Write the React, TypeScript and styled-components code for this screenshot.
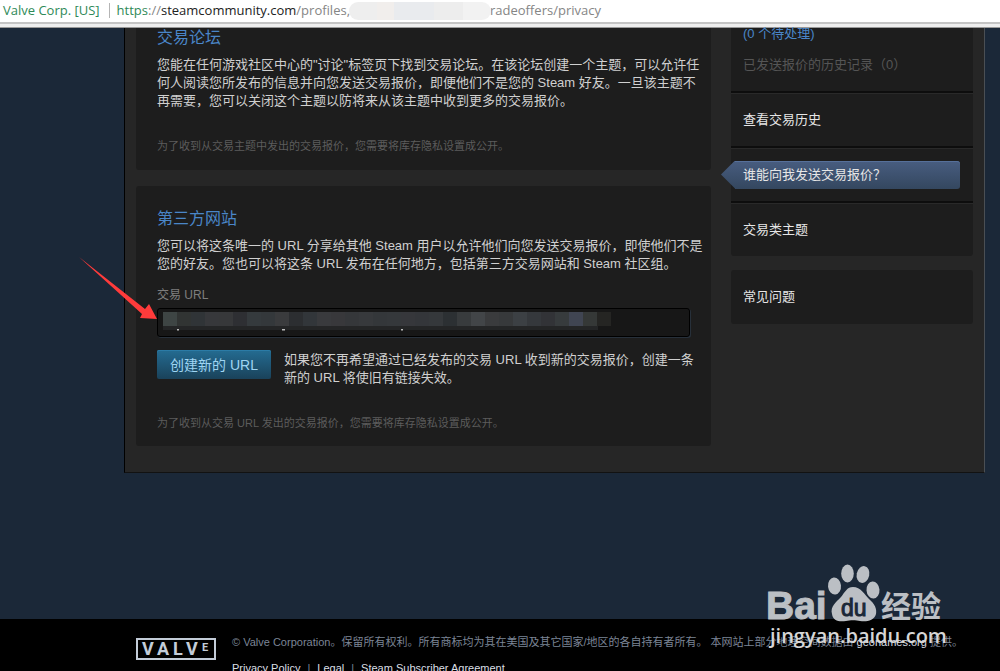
import React from "react";
import styled, { createGlobalStyle } from "styled-components";

const GlobalStyle = createGlobalStyle`
  * { box-sizing: border-box; }
  body {
    margin: 0;
    background: #1b2838;
    font-family: "Liberation Sans", "Noto Sans CJK SC", sans-serif;
    font-size: 13px;
    line-height: 18px;
    color: #d0d0d0;
  }
  a { color: inherit; text-decoration: none; }
`;

const Page = styled.div`
  position: relative;
  height: 100vh;
  overflow: hidden;
  display: flex;
  flex-direction: column;
`;

const AddressBar = styled.header`
  flex: none;
  height: 28px;
  padding: 0 3px;
  background: linear-gradient(#fff 0 22px, #c4c4c4 22px 24px, #eee 24px 27px, #999 27px);
  display: flex;
  align-items: flex-start;
  font-family: "Open Sans", sans-serif;
  font-size: 13px;
  line-height: 21px;
  white-space: pre;
`;

const Secure = styled.span`
  color: #2f8a58;
`;

const Separator = styled.span`
  width: 1px;
  height: 15px;
  margin: 3px 7px 0 9px;
  background: #b5b5b5;
`;

const Host = styled.span`
  color: #222;
`;

const Path = styled.span`
  color: #858585;
`;

const Redacted = styled.span`
  width: 142px;
  height: 18px;
  margin: 2px -1px 0 -1px;
  border-radius: 9px;
  background: linear-gradient(90deg, #eee 0 20%, #f1eeec 20% 32%, #e9ebee 32% 60%, #ededed 60% 80%, #f2f2f2 80%);
  z-index: 1;
`;

const Shell = styled.main`
  flex: none;
  display: flex;
  align-items: flex-start;
  gap: 20px;
  margin: 0 15px 0 124px;
  padding: 0 11px 26px;
  background: #262626;
  border-left: 1px solid #000;
  border-right: 1px solid #4a4f54;
  border-bottom: 1px solid #121212;
`;

const Column = styled.div`
  flex: 1;
  min-width: 0;
  display: flex;
  flex-direction: column;
  gap: 16px;
`;

const Panel = styled.section<{ $clipped?: boolean }>`
  padding: ${(p) => (p.$clipped ? "1px 21px 16px" : "24px 21px 15px")};
  background: #1d1d1d;
  border-radius: ${(p) => (p.$clipped ? "0 0 3px 3px" : "3px")};
`;

const Title = styled.h2`
  margin: 0 0 8px;
  font-size: 16px;
  font-weight: 400;
  line-height: 18px;
  color: #4a86c8;
`;

const Copy = styled.p`
  margin: 0;
  padding-top: 1px;
  white-space: nowrap;
`;

const Note = styled.p`
  margin: 0;
  padding-top: 28px;
  font-size: 11px;
  line-height: 16px;
  color: #5c5c5c;
`;

const FieldLabel = styled.label`
  display: block;
  margin-top: 13px;
  font-size: 12px;
  line-height: 18px;
  color: #7d7d7d;
`;

const FieldWrap = styled.div`
  position: relative;
  margin-top: 4px;
`;

const Field = styled.input`
  display: block;
  width: 100%;
  height: 29px;
  padding: 0 6px;
  color: #ccc;
  background: #171717;
  border: 1px solid #000;
  border-radius: 3px;
  box-shadow: 1px 1px 0 #27303a;
`;

const Mosaic = styled.svg`
  position: absolute;
  left: 5px;
  top: 4px;
`;

const CreateRow = styled.div`
  display: flex;
  align-items: flex-start;
  gap: 13px;
  margin-top: 13px;
`;

const CreateButton = styled.button`
  flex: none;
  width: 114px;
  height: 29px;
  padding: 0;
  border: 0;
  border-radius: 2px;
  background: linear-gradient(#246c92, #1a425a);
  box-shadow: inset 0 1px 0 #2b7ba6;
  color: #9fd5f3;
  font: inherit;
  font-size: 14px;
  white-space: nowrap;
`;

const Sidebar = styled.nav`
  flex: none;
  width: 242px;
  display: flex;
  flex-direction: column;
  gap: 14px;
`;

const Menu = styled.ul<{ $clipped?: boolean }>`
  margin: 0;
  padding: 0;
  list-style: none;
  background: #1d1d1d;
  border-radius: ${(p) => (p.$clipped ? "0 0 3px 3px" : "3px")};
`;

const MenuItem = styled.li<{ $divided?: boolean }>`
  display: flex;
  align-items: center;
  height: ${(p) => (p.$divided ? "55px" : "54px")};
  padding: 0 13px 0 12px;
  color: #e6e6e6;
  border-top: ${(p) => (p.$divided ? "2px solid #0d0d0d" : "0")};
  box-shadow: ${(p) => (p.$divided ? "inset 0 1px 0 #292929" : "none")};
`;

const OfferGroup = styled.li`
  display: flex;
  flex-direction: column;
  gap: 19px;
  padding: 0 12px 20px;
  line-height: 12px;
  color: #4a86c8;
`;

const Faded = styled.a`
  color: #555;
`;

const Active = styled.a`
  position: relative;
  flex: 1;
  height: 28px;
  margin-left: -8px;
  padding-left: 8px;
  line-height: 28px;
  border-radius: 0 3px 3px 0;
  background: linear-gradient(#485d80, #34475f);
  box-shadow: inset 0 1px 0 #56709a;

  &::before {
    content: "";
    position: absolute;
    right: 100%;
    top: 0;
    width: 14px;
    height: 28px;
    background: linear-gradient(#485d80, #34475f);
    clip-path: polygon(100% 0, 100% 100%, 0 50%);
  }
`;

const Footer = styled.footer`
  flex: 1 0 auto;
  display: flex;
  align-items: flex-start;
  gap: 14px;
  margin-top: 146px;
  padding: 14px 15px 0 135px;
  background: #000;
  font-size: 11px;
  line-height: 18px;
  color: #7c8596;
  white-space: nowrap;
`;

const Logo = styled.svg`
  flex: none;
  margin-top: 4px;
`;

const Legal = styled.div`
  display: flex;
  flex-direction: column;
  gap: 8px;

  a { color: #dadfe4; }
`;

const Notice = styled.p`
  margin: 0;
`;

const Links = styled.div`
  display: flex;
  gap: 7px;
`;

const Arrow = styled.svg`
  position: absolute;
  left: 76px;
  top: 254px;
`;

const Watermark = styled.svg`
  position: absolute;
  right: 50px;
  bottom: 16px;
`;

const cells = [
  "#3e4544", "#313433", "#303437", "#37383b", "#37383a", "#2e2f33", "#353a3d", "#34383b", "#3a3b3d",
  "#2c2e31", "#32363a", "#393a3d", "#38383b", "#35373a", "#37393c", "#34373a", "#35383b", "#36373b",
  "#34363a", "#35383b", "#2c3033", "#383b3d", "#424548", "#3a3b3d", "#37393b", "#3c4044", "#35383c",
  "#323337", "#373b3d", "#404552", "#353837", "#252523",
];

function PixelatedUrl() {
  return (
    <Mosaic width="450" height="20" viewBox="0 0 450 20" aria-hidden="true">
      {cells.map((fill, i) => (
        <rect key={i} x={i * 14 + 1} y="0" width="14" height="14" fill={fill} />
      ))}
      <rect x="1" y="14" width="435" height="4" fill="#242526" />
      <path d="M15 17h2v1.500h-2zM120 17h3v1.500h-3zM239 17h2v1.500h-2z" fill="#bbb" />
    </Mosaic>
  );
}

function ValveLogo() {
  return (
    <Logo width="83" height="24" viewBox="0 0 83 24" role="img" aria-label="Valve">
      <rect x="2" y="2" width="78" height="20" fill="none" stroke="#c3ccd8" strokeWidth="2" />
      <g fill="#c3ccd8" fontFamily="Liberation Sans Narrow, Roboto, sans-serif" fontWeight="700" fontSize="18">
        <text x="7" y="18">V</text>
        <text x="22" y="18">A</text>
        <text x="38" y="18">L</text>
        <text x="51" y="18">V</text>
        <text x="67" y="14" fontSize="11">E</text>
      </g>
    </Logo>
  );
}

function BaiduMark() {
  return (
    <Watermark width="184" height="94" viewBox="0 0 184 94" role="img" aria-label="Baidu 经验">
      <g fill="#bbbfc4">
        <ellipse cx="68.500" cy="25" rx="6.500" ry="8.500" transform="rotate(-6 68.500 25)" />
        <ellipse cx="81.500" cy="12.500" rx="6.300" ry="9" />
        <ellipse cx="97" cy="13.500" rx="6.300" ry="8.500" transform="rotate(12 97 13.500)" />
        <ellipse cx="107" cy="29" rx="6.500" ry="8.500" transform="rotate(-4 107 29)" />
        <path d="M87 26C95 26 98 33 103 38C109 43 111 48 110 53C108 60 100 61 94 60C90 59 84 59 80 60C73 61 67 60 66 53C64 46 70 41 75 36C79 31 81 26 87 26Z" />
        <text x="0" y="58" fontFamily="Liberation Sans" fontWeight="700" fontSize="39" stroke="#bbbfc4">Bai</text>
        <text x="115" y="56" fontFamily="Noto Sans CJK SC" fontWeight="700" fontSize="30">经验</text>
      </g>
      <text x="75" y="55" fontFamily="Liberation Sans" fontSize="23" fill="#1b2838" stroke="#1b2838">du</text>
      <text x="4" y="82" fontFamily="Open Sans" fontWeight="600" fontSize="20" fill="#d6d6d6">jingyan.baidu.com</text>
    </Watermark>
  );
}

export default function App() {
  return (
    <>
      <GlobalStyle />
      <Page>
        <AddressBar>
          <Secure>Valve Corp. [US]</Secure>
          <Separator />
          <Secure>https</Secure>
          <Path>://</Path>
          <Host>steamcommunity.com</Host>
          <Path>/profiles,</Path>
          <Redacted />
          <Path>radeoffers/privacy</Path>
        </AddressBar>

        <Shell>
          <Column>
            <Panel $clipped>
              <Title>交易论坛</Title>
              <Copy>
                您能在任何游戏社区中心的"讨论"标签页下找到交易论坛。在该论坛创建一个主题，可以允许任
                <br />
                何人阅读您所发布的信息并向您发送交易报价，即便他们不是您的 Steam 好友。一旦该主题不
                <br />
                再需要，您可以关闭这个主题以防将来从该主题中收到更多的交易报价。
              </Copy>
              <Note>为了收到从交易主题中发出的交易报价，您需要将库存隐私设置成公开。</Note>
            </Panel>

            <Panel>
              <Title>第三方网站</Title>
              <Copy>
                您可以将这条唯一的 URL 分享给其他 Steam 用户以允许他们向您发送交易报价，即使他们不是
                <br />
                您的好友。您也可以将这条 URL 发布在任何地方，包括第三方交易网站和 Steam 社区组。
              </Copy>
              <FieldLabel htmlFor="trade-url">交易 URL</FieldLabel>
              <FieldWrap>
                <Field id="trade-url" type="text" readOnly />
                <PixelatedUrl />
              </FieldWrap>
              <CreateRow>
                <CreateButton type="button">创建新的 URL</CreateButton>
                <Copy>
                  如果您不再希望通过已经发布的交易 URL 收到新的交易报价，创建一条
                  <br />
                  新的 URL 将使旧有链接失效。
                </Copy>
              </CreateRow>
              <Note>为了收到从交易 URL 发出的交易报价，您需要将库存隐私设置成公开。</Note>
            </Panel>
          </Column>

          <Sidebar>
            <Menu $clipped>
              <OfferGroup>
                <a href="#pending">(0 个待处理)</a>
                <Faded href="#sent">已发送报价的历史记录（0）</Faded>
              </OfferGroup>
              <MenuItem $divided><a href="#history">查看交易历史</a></MenuItem>
              <MenuItem $divided><Active href="#privacy">谁能向我发送交易报价？</Active></MenuItem>
              <MenuItem $divided><a href="#topics">交易类主题</a></MenuItem>
            </Menu>
            <Menu>
              <MenuItem><a href="#faq">常见问题</a></MenuItem>
            </Menu>
          </Sidebar>
        </Shell>

        <Footer>
          <ValveLogo />
          <Legal>
            <Notice>
              © Valve Corporation。保留所有权利。所有商标均为其在美国及其它国家/地区的各自持有者所有。 本网站上部分地理空间数据由{" "}
              <a href="#geonames">geonames.org</a> 提供。
            </Notice>
            <Links>
              <a href="#policy">Privacy Policy</a>
              <span>|</span>
              <a href="#legal">Legal</a>
              <span>|</span>
              <a href="#agreement">Steam Subscriber Agreement</a>
            </Links>
          </Legal>
        </Footer>

        <Arrow width="84" height="70" viewBox="0 0 84 70" aria-hidden="true">
          <path d="M3 3L69 55L73 50L81 65L64 64L66 60Z" fill="#ff3b3b" />
        </Arrow>
        <BaiduMark />
      </Page>
    </>
  );
}
